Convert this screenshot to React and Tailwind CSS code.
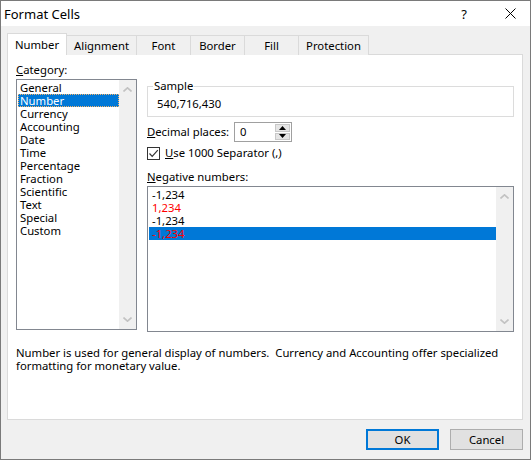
const CATEGORIES = [
  "General", "Number", "Currency", "Accounting", "Date", "Time",
  "Percentage", "Fraction", "Scientific", "Text", "Special", "Custom",
];

const NEGATIVES = [
  { text: "-1,234", red: false },
  { text: "1,234", red: true },
  { text: "-1,234", red: false },
  { text: "-1,234", red: true },
];

const TABS = [
  { name: "Number", w: "w-[60px]" },
  { name: "Alignment", w: "w-[70px]" },
  { name: "Font", w: "w-[54px]" },
  { name: "Border", w: "w-[54px]" },
  { name: "Fill", w: "w-[54px]" },
  { name: "Protection", w: "w-[70px]" },
];

function Chevron({ up }) {
  return (
    <svg width="9" height="5" viewBox="0 0 9 5">
      <path
        d={up ? "M0.5 4.5 L4.5 0.8 L8.5 4.5" : "M0.5 0.5 L4.5 4.2 L8.5 0.5"}
        fill="none"
        stroke="#c2c2c2"
        strokeWidth="1.6"
      />
    </svg>
  );
}

function ScrollBar() {
  return (
    <div className="w-[17px] h-full shrink-0 bg-[#f0f0f0] flex flex-col items-center justify-between py-[7px]">
      <Chevron up />
      <Chevron />
    </div>
  );
}

function Spinner() {
  return (
    <div className="w-[58px] h-[20px] border border-[#a0a0a0] bg-white flex items-center">
      <span className="flex-1 pl-[5px] leading-[18px]">0</span>
      <div className="w-[16px] h-[18px] flex flex-col gap-[1px] pr-[1px] py-[1px]">
        <div className="flex-1 bg-[#e5e5e5] border border-[#c8c8c8] flex items-center justify-center">
          <svg width="7" height="4" viewBox="0 0 7 4"><path d="M0 4 L3.5 0 L7 4 Z" fill="#000" /></svg>
        </div>
        <div className="flex-1 bg-[#e5e5e5] border border-[#c8c8c8] flex items-center justify-center">
          <svg width="7" height="4" viewBox="0 0 7 4"><path d="M0 0 L3.5 4 L7 0 Z" fill="#000" /></svg>
        </div>
      </div>
    </div>
  );
}

export default function App() {
  return (
    <div className="w-[531px] h-[460px] border border-[#7a7a7a] bg-[#f0f0f0] flex flex-col text-[11.3px] text-black whitespace-nowrap font-['Noto_Sans',sans-serif]">
      {/* title bar */}
      <div className="h-[25px] bg-white flex items-center pl-[3px] pr-[14px] shrink-0">
        <span className="text-[13px] leading-[18px] flex-1">Format Cells</span>
        <span className="text-[13px] leading-[18px] mr-[38px]">?</span>
        <svg width="11" height="11" viewBox="0 0 11 11">
          <path d="M0.5 0.5 L10.5 10.5 M10.5 0.5 L0.5 10.5" stroke="#000" strokeWidth="1" />
        </svg>
      </div>

      <div className="flex flex-col pl-[6px] pr-[7px]">
        {/* tabs */}
        <div className="flex items-end h-[22px] mt-[7px] -mb-px relative z-10">
          {TABS.map((t, i) =>
            i === 0 ? (
              <div
                key={t.name}
                className={`${t.w} h-[22px] bg-white border border-b-0 border-[#dadada] flex items-center justify-center pt-[2px]`}
              >
                {t.name}
              </div>
            ) : (
              <div
                key={t.name}
                className={`${t.w} h-[20px] bg-[#f0f0f0] border border-l-0 border-b-0 border-[#dadada] flex items-center justify-center pt-[1px]`}
              >
                {t.name}
              </div>
            )
          )}
        </div>

        {/* panel */}
        <div className="h-[366px] bg-white border border-[#dadada] flex flex-col pl-[8px] pt-[7px]">
          <div className="flex gap-[10px]">
            {/* category */}
            <div className="w-[121px] flex flex-col">
              <div className="leading-[16px] h-[16px]"><span className="underline">C</span>ategory:</div>
              <div className="mt-[1px] h-[251px] border border-[#828790] flex">
                <div className="flex-1 pl-[1px] pt-[1px] flex flex-col">
                  {CATEGORIES.map((c) =>
                    c === "Number" ? (
                      <div key={c} className="h-[13px] leading-[11px] bg-[#0078d7] text-white border border-dotted border-[#f5b36a] pl-[1px]">
                        {c}
                      </div>
                    ) : (
                      <div key={c} className="h-[13px] leading-[13px] pl-[2px]">{c}</div>
                    )
                  )}
                </div>
                <ScrollBar />
              </div>
            </div>

            {/* right side */}
            <div className="w-[367px] flex flex-col">
              <fieldset className="mt-[16px] h-[39px] border border-[#dcdcdc] pl-[5px] pr-0 pb-0 m-0">
                <legend className="px-[1px] leading-[16px]">Sample</legend>
                <div className="ml-[4px] mt-[2px] leading-[16px]">540,716,430</div>
              </fieldset>

              <div className="flex items-center h-[20px] mt-[5px]">
                <span className="w-[87px]"><span className="underline">D</span>ecimal places:</span>
                <Spinner />
              </div>

              <div className="flex items-center h-[16px] mt-[3px] gap-[5px]">
                <div className="w-[13px] h-[13px] border border-[#333] bg-white flex items-center justify-center">
                  <svg width="11" height="11" viewBox="0 0 11 11">
                    <path d="M1.5 5.5 L4.2 8.3 L9.8 2.2" fill="none" stroke="#333" strokeWidth="1.2" />
                  </svg>
                </div>
                <span><span className="underline">U</span>se 1000 Separator (<span className="underline">,</span>)</span>
              </div>

              <div className="leading-[16px] h-[16px] mt-[8px]"><span className="underline">N</span>egative numbers:</div>
              <div className="mt-[1px] h-[146px] border border-[#828790] flex">
                <div className="flex-1 pl-[1px] pt-[1px] flex flex-col">
                  {NEGATIVES.map((n, i) => (
                    <div
                      key={i}
                      className={`h-[13px] leading-[13px] pl-[3px] ${i === 3 ? "bg-[#0078d7]" : ""} ${n.red ? "text-[#ff0000]" : "text-black"}`}
                    >
                      {n.text}
                    </div>
                  ))}
                </div>
                <ScrollBar />
              </div>
            </div>
          </div>

          <p className="mt-[14px] leading-[13px]">
            Number is used for general display of numbers.&nbsp; Currency and Accounting offer specialized
            <br />
            formatting for monetary value.
          </p>
        </div>

        {/* buttons */}
        <div className="flex justify-end gap-[11px] mt-[9px]">
          <button className="w-[73px] h-[21px] bg-[#e1e1e1] border-2 border-[#0078d7] leading-[17px]">OK</button>
          <button className="w-[73px] h-[21px] bg-[#e1e1e1] border border-[#adadad] leading-[19px]">Cancel</button>
        </div>
      </div>
    </div>
  );
}
